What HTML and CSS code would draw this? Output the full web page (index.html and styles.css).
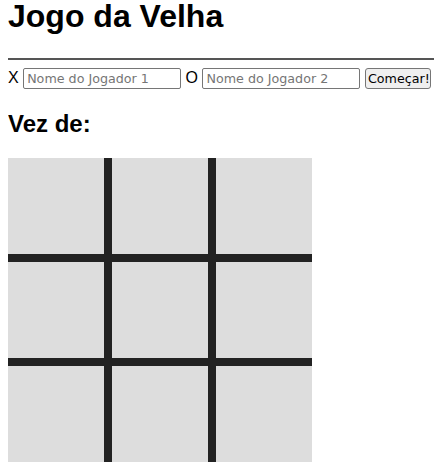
FILE: index.html
```html
<!DOCTYPE html>
<html lang="pt">
<head>
<meta charset="utf-8">
<title>Jogo da Velha</title>
<link rel="stylesheet" href="styles.css">
</head>
<body>
<header class="topo">
  <h1 class="titulo">Jogo da Velha</h1>
  <hr class="divisor">
  <div class="jogadores">X <input type="text" class="nome" placeholder="Nome do Jogador 1"> O <input type="text" class="nome" placeholder="Nome do Jogador 2"> <button type="button" class="comecar">Começar!</button></div>
</header>
<h2 class="vez">Vez de:</h2>
<div class="tabuleiro">
  <div class="casa"></div><div class="casa"></div><div class="casa"></div>
  <div class="casa"></div><div class="casa"></div><div class="casa"></div>
  <div class="casa"></div><div class="casa"></div><div class="casa"></div>
</div>
</body>
</html>
```
FILE: styles.css
```css
body {
  margin: 0 1px 8px 8px;
  font-family: "Liberation Sans", Arial, sans-serif;
  font-size: 16px;
  color: #000;
  background: #fff;
}
.topo {
  display: block;
}
.titulo {
  font-size: 32px;
  font-weight: bold;
  line-height: 32px;
  margin: 0 0 26px;
}
.divisor {
  margin: 0 0 8px;
  border: 0;
  border-top: 2px solid #555;
}
.jogadores {
  white-space: nowrap;
}
.nome {
  box-sizing: border-box;
  width: 158px;
  height: 21px;
  padding: 1px 3px;
  font-family: "DejaVu Sans", sans-serif;
  font-size: 12.7px;
  border: 1px solid #767676;
  border-radius: 2px;
  margin: 0;
}
.nome::placeholder {
  color: #757575;
}
.comecar {
  box-sizing: border-box;
  width: 66px;
  height: 21px;
  padding: 1px 2px;
  font-family: "DejaVu Sans", sans-serif;
  font-size: 12.7px;
  color: #000;
  background: #efefef;
  border: 1px solid #767676;
  border-radius: 3px;
  margin: 0;
}
.vez {
  font-size: 24px;
  font-weight: bold;
  margin: 21px 0 20px;
}
.tabuleiro {
  display: grid;
  grid-template-columns: repeat(3, 96px);
  grid-template-rows: repeat(3, 96px);
  gap: 8px;
  width: 304px;
  background: #222;
}
.casa {
  background: #ddd;
}
```
